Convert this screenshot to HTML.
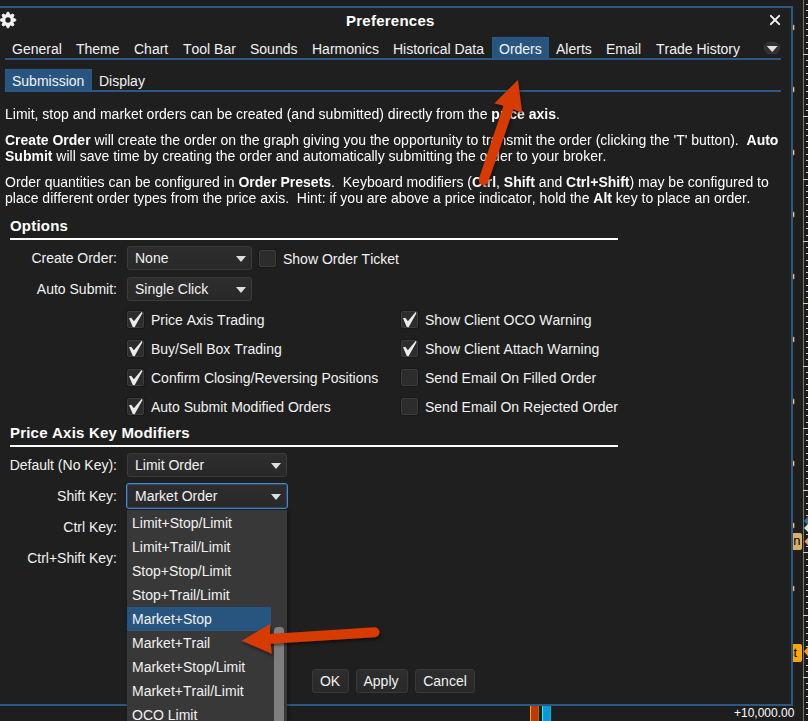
<!DOCTYPE html>
<html>
<head>
<meta charset="utf-8">
<title>Preferences</title>
<style>
html,body{margin:0;padding:0;}
body{font-kerning:none;width:808px;height:721px;overflow:hidden;background:#1e1e1e;font-family:"Liberation Sans",sans-serif;font-size:14px;color:#f2f2f2;position:relative;}
.abs{position:absolute;}
.t{position:absolute;white-space:pre;line-height:16px;font-size:14px;}
.b{font-weight:bold;color:#fff;}
.g{will-change:transform;color:#fff;}
.h{position:absolute;white-space:pre;line-height:18px;font-size:15px;font-weight:bold;color:#fff;letter-spacing:0.2px;}
.tab{position:absolute;white-space:pre;line-height:16px;font-size:14px;top:41px;}
.combo{position:absolute;box-sizing:border-box;height:24px;background:linear-gradient(#2d2d2d,#292929);border:1px solid #3b3b3b;border-radius:3px;}
.combo span{position:absolute;left:7px;top:3px;line-height:16px;white-space:pre;}
.combo i{position:absolute;right:5px;top:9px;width:0;height:0;border-left:5px solid transparent;border-right:5px solid transparent;border-top:6px solid #dedede;}
.cb{position:absolute;box-sizing:border-box;width:17px;height:17px;background:#2c2c2c;border:1px solid #3d3d3d;border-radius:2px;box-shadow:0 0 1px 1px rgba(0,0,0,0.22);}
.cb svg{position:absolute;left:-1px;top:-1px;}
.btn{position:absolute;box-sizing:border-box;height:24px;background:linear-gradient(#2d2d2d,#292929);border:1px solid #393939;border-radius:3px;text-align:center;line-height:22px;font-size:14px;}
.li{position:absolute;left:5px;white-space:pre;line-height:16px;font-size:14px;}
</style>
</head>
<body>
<!-- dialog frame -->
<div class="abs" id="dlg" style="left:-10px;top:6px;width:799px;height:696px;background:#1f1f1f;border:2px solid #2a5985;"></div>

<!-- right price-axis strip -->
<div class="abs" id="axisbg" style="left:804px;top:0;width:4px;height:721px;background:#1c1c1c;"></div>
<div class="abs" id="axisline" style="left:803px;top:0;width:1px;height:721px;background:#77775f;"></div>
<svg class="abs" id="ticks" style="left:793px;top:0" width="15" height="721" viewBox="0 0 15 721"><rect x="13" y="4" width="2" height="1" fill="#d5d3b9"/><rect x="13" y="10" width="2" height="1" fill="#d5d3b9"/><rect x="13" y="17" width="2" height="1" fill="#d5d3b9"/><rect x="13" y="23" width="2" height="1" fill="#d5d3b9"/><rect x="13" y="29" width="2" height="1" fill="#d5d3b9"/><rect x="13" y="35" width="2" height="1" fill="#d5d3b9"/><rect x="13" y="42" width="2" height="1" fill="#d5d3b9"/><rect x="13" y="48" width="2" height="1" fill="#d5d3b9"/><rect x="10" y="54" width="5" height="1" fill="#d5d3b9"/><rect x="13" y="60" width="2" height="1" fill="#d5d3b9"/><rect x="13" y="66" width="2" height="1" fill="#d5d3b9"/><rect x="13" y="73" width="2" height="1" fill="#d5d3b9"/><rect x="13" y="79" width="2" height="1" fill="#d5d3b9"/><rect x="13" y="85" width="2" height="1" fill="#d5d3b9"/><rect x="13" y="91" width="2" height="1" fill="#d5d3b9"/><rect x="13" y="98" width="2" height="1" fill="#d5d3b9"/><rect x="13" y="104" width="2" height="1" fill="#d5d3b9"/><rect x="13" y="110" width="2" height="1" fill="#d5d3b9"/><rect x="10" y="116" width="5" height="1" fill="#d5d3b9"/><rect x="13" y="123" width="2" height="1" fill="#d5d3b9"/><rect x="13" y="129" width="2" height="1" fill="#d5d3b9"/><rect x="13" y="135" width="2" height="1" fill="#d5d3b9"/><rect x="13" y="141" width="2" height="1" fill="#d5d3b9"/><rect x="13" y="147" width="2" height="1" fill="#d5d3b9"/><rect x="13" y="154" width="2" height="1" fill="#d5d3b9"/><rect x="13" y="160" width="2" height="1" fill="#d5d3b9"/><rect x="13" y="166" width="2" height="1" fill="#d5d3b9"/><rect x="13" y="172" width="2" height="1" fill="#d5d3b9"/><rect x="10" y="179" width="5" height="1" fill="#d5d3b9"/><rect x="13" y="185" width="2" height="1" fill="#d5d3b9"/><rect x="13" y="191" width="2" height="1" fill="#d5d3b9"/><rect x="13" y="197" width="2" height="1" fill="#d5d3b9"/><rect x="13" y="204" width="2" height="1" fill="#d5d3b9"/><rect x="13" y="210" width="2" height="1" fill="#d5d3b9"/><rect x="13" y="216" width="2" height="1" fill="#d5d3b9"/><rect x="13" y="222" width="2" height="1" fill="#d5d3b9"/><rect x="13" y="228" width="2" height="1" fill="#d5d3b9"/><rect x="13" y="235" width="2" height="1" fill="#d5d3b9"/><rect x="10" y="241" width="5" height="1" fill="#d5d3b9"/><rect x="13" y="247" width="2" height="1" fill="#d5d3b9"/><rect x="13" y="253" width="2" height="1" fill="#d5d3b9"/><rect x="13" y="260" width="2" height="1" fill="#d5d3b9"/><rect x="13" y="266" width="2" height="1" fill="#d5d3b9"/><rect x="13" y="272" width="2" height="1" fill="#d5d3b9"/><rect x="13" y="278" width="2" height="1" fill="#d5d3b9"/><rect x="13" y="285" width="2" height="1" fill="#d5d3b9"/><rect x="13" y="291" width="2" height="1" fill="#d5d3b9"/><rect x="13" y="297" width="2" height="1" fill="#d5d3b9"/><rect x="10" y="303" width="5" height="1" fill="#d5d3b9"/><rect x="13" y="309" width="2" height="1" fill="#d5d3b9"/><rect x="13" y="316" width="2" height="1" fill="#d5d3b9"/><rect x="13" y="322" width="2" height="1" fill="#d5d3b9"/><rect x="13" y="328" width="2" height="1" fill="#d5d3b9"/><rect x="13" y="334" width="2" height="1" fill="#d5d3b9"/><rect x="13" y="341" width="2" height="1" fill="#d5d3b9"/><rect x="13" y="347" width="2" height="1" fill="#d5d3b9"/><rect x="13" y="353" width="2" height="1" fill="#d5d3b9"/><rect x="13" y="359" width="2" height="1" fill="#d5d3b9"/><rect x="10" y="366" width="5" height="1" fill="#d5d3b9"/><rect x="13" y="372" width="2" height="1" fill="#d5d3b9"/><rect x="13" y="378" width="2" height="1" fill="#d5d3b9"/><rect x="13" y="384" width="2" height="1" fill="#d5d3b9"/><rect x="13" y="390" width="2" height="1" fill="#d5d3b9"/><rect x="13" y="397" width="2" height="1" fill="#d5d3b9"/><rect x="13" y="403" width="2" height="1" fill="#d5d3b9"/><rect x="13" y="409" width="2" height="1" fill="#d5d3b9"/><rect x="13" y="415" width="2" height="1" fill="#d5d3b9"/><rect x="13" y="422" width="2" height="1" fill="#d5d3b9"/><rect x="10" y="428" width="5" height="1" fill="#d5d3b9"/><rect x="13" y="434" width="2" height="1" fill="#d5d3b9"/><rect x="13" y="440" width="2" height="1" fill="#d5d3b9"/><rect x="13" y="446" width="2" height="1" fill="#d5d3b9"/><rect x="13" y="453" width="2" height="1" fill="#d5d3b9"/><rect x="13" y="459" width="2" height="1" fill="#d5d3b9"/><rect x="13" y="465" width="2" height="1" fill="#d5d3b9"/><rect x="13" y="471" width="2" height="1" fill="#d5d3b9"/><rect x="13" y="478" width="2" height="1" fill="#d5d3b9"/><rect x="13" y="484" width="2" height="1" fill="#d5d3b9"/><rect x="10" y="490" width="5" height="1" fill="#d5d3b9"/><rect x="13" y="496" width="2" height="1" fill="#d5d3b9"/><rect x="13" y="503" width="2" height="1" fill="#d5d3b9"/><rect x="13" y="509" width="2" height="1" fill="#d5d3b9"/><rect x="13" y="515" width="2" height="1" fill="#d5d3b9"/><rect x="13" y="521" width="2" height="1" fill="#d5d3b9"/><rect x="13" y="527" width="2" height="1" fill="#d5d3b9"/><rect x="13" y="534" width="2" height="1" fill="#d5d3b9"/><rect x="13" y="540" width="2" height="1" fill="#d5d3b9"/><rect x="13" y="546" width="2" height="1" fill="#d5d3b9"/><rect x="10" y="552" width="5" height="1" fill="#d5d3b9"/><rect x="13" y="559" width="2" height="1" fill="#d5d3b9"/><rect x="13" y="565" width="2" height="1" fill="#d5d3b9"/><rect x="13" y="571" width="2" height="1" fill="#d5d3b9"/><rect x="13" y="577" width="2" height="1" fill="#d5d3b9"/><rect x="13" y="584" width="2" height="1" fill="#d5d3b9"/><rect x="13" y="590" width="2" height="1" fill="#d5d3b9"/><rect x="13" y="596" width="2" height="1" fill="#d5d3b9"/><rect x="13" y="602" width="2" height="1" fill="#d5d3b9"/><rect x="13" y="608" width="2" height="1" fill="#d5d3b9"/><rect x="10" y="615" width="5" height="1" fill="#d5d3b9"/><rect x="13" y="621" width="2" height="1" fill="#d5d3b9"/><rect x="13" y="627" width="2" height="1" fill="#d5d3b9"/><rect x="13" y="633" width="2" height="1" fill="#d5d3b9"/><rect x="13" y="640" width="2" height="1" fill="#d5d3b9"/><rect x="13" y="646" width="2" height="1" fill="#d5d3b9"/><rect x="13" y="652" width="2" height="1" fill="#d5d3b9"/><rect x="13" y="658" width="2" height="1" fill="#d5d3b9"/><rect x="13" y="665" width="2" height="1" fill="#d5d3b9"/><rect x="13" y="671" width="2" height="1" fill="#d5d3b9"/><rect x="10" y="677" width="5" height="1" fill="#d5d3b9"/><rect x="13" y="683" width="2" height="1" fill="#d5d3b9"/><rect x="13" y="689" width="2" height="1" fill="#d5d3b9"/><rect x="13" y="696" width="2" height="1" fill="#d5d3b9"/><rect x="13" y="702" width="2" height="1" fill="#d5d3b9"/><rect x="13" y="708" width="2" height="1" fill="#d5d3b9"/><rect x="13" y="714" width="2" height="1" fill="#d5d3b9"/><rect x="0" y="24" width="1" height="7" fill="#8a2018"/><rect x="0" y="25" width="1" height="5" fill="#e8a040"/><rect x="1" y="25" width="1" height="5" fill="#e8a040" fill-opacity="0.35"/><rect x="0" y="26" width="1" height="3" fill="#f4cf98"/><rect x="0" y="86" width="1" height="7" fill="#8a2018"/><rect x="0" y="87" width="1" height="5" fill="#e8a040"/><rect x="1" y="87" width="1" height="5" fill="#e8a040" fill-opacity="0.35"/><rect x="0" y="88" width="1" height="3" fill="#f4cf98"/><rect x="0" y="149" width="1" height="7" fill="#8a2018"/><rect x="0" y="150" width="1" height="5" fill="#e8a040"/><rect x="1" y="150" width="1" height="5" fill="#e8a040" fill-opacity="0.35"/><rect x="0" y="151" width="1" height="3" fill="#f4cf98"/><rect x="0" y="211" width="1" height="7" fill="#8a2018"/><rect x="0" y="212" width="1" height="5" fill="#e8a040"/><rect x="1" y="212" width="1" height="5" fill="#e8a040" fill-opacity="0.35"/><rect x="0" y="213" width="1" height="3" fill="#f4cf98"/><rect x="0" y="273" width="1" height="7" fill="#8a2018"/><rect x="0" y="274" width="1" height="5" fill="#e8a040"/><rect x="1" y="274" width="1" height="5" fill="#e8a040" fill-opacity="0.35"/><rect x="0" y="275" width="1" height="3" fill="#f4cf98"/><rect x="0" y="336" width="1" height="7" fill="#8a2018"/><rect x="0" y="337" width="1" height="5" fill="#e8a040"/><rect x="1" y="337" width="1" height="5" fill="#e8a040" fill-opacity="0.35"/><rect x="0" y="338" width="1" height="3" fill="#f4cf98"/><rect x="0" y="398" width="1" height="7" fill="#8a2018"/><rect x="0" y="399" width="1" height="5" fill="#e8a040"/><rect x="1" y="399" width="1" height="5" fill="#e8a040" fill-opacity="0.35"/><rect x="0" y="400" width="1" height="3" fill="#f4cf98"/><rect x="0" y="460" width="1" height="7" fill="#8a2018"/><rect x="0" y="461" width="1" height="5" fill="#e8a040"/><rect x="1" y="461" width="1" height="5" fill="#e8a040" fill-opacity="0.35"/><rect x="0" y="462" width="1" height="3" fill="#f4cf98"/><rect x="0" y="522" width="1" height="7" fill="#8a2018"/><rect x="0" y="523" width="1" height="5" fill="#e8a040"/><rect x="1" y="523" width="1" height="5" fill="#e8a040" fill-opacity="0.35"/><rect x="0" y="524" width="1" height="3" fill="#f4cf98"/><rect x="0" y="585" width="1" height="7" fill="#8a2018"/><rect x="0" y="586" width="1" height="5" fill="#e8a040"/><rect x="1" y="586" width="1" height="5" fill="#e8a040" fill-opacity="0.35"/><rect x="0" y="587" width="1" height="3" fill="#f4cf98"/><rect x="0" y="647" width="1" height="7" fill="#8a2018"/><rect x="0" y="648" width="1" height="5" fill="#e8a040"/><rect x="1" y="648" width="1" height="5" fill="#e8a040" fill-opacity="0.35"/><rect x="0" y="649" width="1" height="3" fill="#f4cf98"/></svg>


<!-- right-edge chart labels -->
<div class="abs" id="lab1" style="left:793px;top:533px;width:9px;height:17px;background:#dcae64;border-radius:0 2px 2px 0;overflow:hidden;"><span style="position:absolute;left:-7px;top:0px;font-size:13px;line-height:16px;color:#000;white-space:pre;">en</span></div>
<div class="abs" id="lab2" style="left:793px;top:644px;width:9px;height:18px;background:#ffa500;border-radius:0 2px 2px 0;overflow:hidden;"><span style="position:absolute;left:-6px;top:1px;font-size:13px;line-height:16px;color:#000;white-space:pre;">st</span></div>
<svg class="abs" id="diam" style="left:803px;top:0" width="5" height="721" viewBox="0 0 5 721">
<path d="M1 521 L6 515.5 L6 526.5 Z" fill="#3a6ea5"/>
<path d="M1 528 L6 523 L6 533 Z" fill="#d8f0dc"/>
<path d="M1.5 541.5 L7 535.5 L7 547.5 Z" fill="#dcae64"/>
<path d="M1 651.5 L7 644.5 L7 658.5 Z" fill="#ffa500"/>
</svg>

<!-- title bar -->
<svg class="abs" id="gear" style="left:0;top:11px" width="18" height="18" viewBox="0 0 18 18">
<g transform="translate(8,9)" fill="#f2f2f2" stroke="#f2f2f2" stroke-width="0.8" stroke-linejoin="round">
<circle r="5.5" stroke="none"/>
<path d="M-1.9 -5 L-0.8 -7.8 L0.8 -7.8 L1.9 -5 Z" transform="rotate(0)"/><path d="M-1.9 -5 L-0.8 -7.8 L0.8 -7.8 L1.9 -5 Z" transform="rotate(45)"/><path d="M-1.9 -5 L-0.8 -7.8 L0.8 -7.8 L1.9 -5 Z" transform="rotate(90)"/><path d="M-1.9 -5 L-0.8 -7.8 L0.8 -7.8 L1.9 -5 Z" transform="rotate(135)"/><path d="M-1.9 -5 L-0.8 -7.8 L0.8 -7.8 L1.9 -5 Z" transform="rotate(180)"/><path d="M-1.9 -5 L-0.8 -7.8 L0.8 -7.8 L1.9 -5 Z" transform="rotate(225)"/><path d="M-1.9 -5 L-0.8 -7.8 L0.8 -7.8 L1.9 -5 Z" transform="rotate(270)"/><path d="M-1.9 -5 L-0.8 -7.8 L0.8 -7.8 L1.9 -5 Z" transform="rotate(315)"/>
<circle r="2.7" fill="#1f1f1f" stroke="none"/>
</g>
</svg>
<div class="h" id="title" style="left:346px;top:12px;letter-spacing:0.25px;">Preferences</div>
<svg class="abs" id="close" style="left:767px;top:12px" width="16" height="16" viewBox="0 0 16 16"><path d="M3.85 3.85 L12.15 12.15 M12.15 3.85 L3.85 12.15" stroke="#f4f4f4" stroke-width="2" stroke-linecap="round" fill="none"/></svg>

<!-- main tabs -->
<div class="abs" id="tabsel" style="left:492px;top:37px;width:57px;height:22px;box-sizing:border-box;background:#28557f;border:1px solid #2a5985;"></div>
<div class="abs" id="tabline" style="left:5px;top:58px;width:776px;height:2px;background:#2a5985;"></div>
<div class="tab" id="tb1" style="left:12px">General</div>
<div class="tab" id="tb2" style="left:76px">Theme</div>
<div class="tab" id="tb3" style="left:134px">Chart</div>
<div class="tab" id="tb4" style="left:183px">Tool Bar</div>
<div class="tab" id="tb5" style="left:250px">Sounds</div>
<div class="tab" id="tb6" style="left:312px">Harmonics</div>
<div class="tab" id="tb7" style="left:393px">Historical Data</div>
<div class="tab" id="tb8" style="left:499px">Orders</div>
<div class="tab" id="tb9" style="left:556px">Alerts</div>
<div class="tab" id="tb10" style="left:606px">Email</div>
<div class="tab" id="tb11" style="left:656px">Trade History</div>
<div class="abs" id="pill" style="left:764px;top:42px;width:16px;height:12px;box-sizing:border-box;background:#303030;border:1px solid #3a3a3a;border-radius:6px;"></div>
<svg class="abs" id="pilltri" style="left:764px;top:42px" width="16" height="12" viewBox="0 0 16 12"><path d="M2.8 4 L13.6 4 L8.2 10 Z" fill="#e2e2e2"/></svg>

<!-- sub tabs -->
<div class="abs" id="subsel" style="left:5px;top:69px;width:87px;height:22px;box-sizing:border-box;background:#28557f;border:1px solid #2a5985;"></div>
<div class="abs" id="subline" style="left:5px;top:90px;width:776px;height:2px;background:#2a5985;"></div>
<div class="t" id="st1" style="left:12px;top:73px">Submission</div>
<div class="t" id="st2" style="left:99px;top:73px">Display</div>

<!-- description -->
<div class="t g" id="p1" style="left:5px;top:106px">Limit, stop and market orders can be created (and submitted) directly from the <span class="b">price axis</span>.</div>
<div class="t g" id="p2" style="left:5px;top:132px"><span class="b">Create Order</span> will create the order on the graph giving you the opportunity to transmit the order (clicking the 'T' button).  <span class="b">Auto</span></div>
<div class="t g" id="p3" style="left:5px;top:148px"><span class="b">Submit</span> will save time by creating the order and automatically submitting the order to your broker.</div>
<div class="t g" id="p4" style="left:5px;top:174px">Order quantities can be configured in <span class="b">Order Presets</span>.  Keyboard modifiers (<span class="b">Ctrl</span>, <span class="b">Shift</span> and <span class="b">Ctrl+Shift</span>) may be configured to</div>
<div class="t g" id="p5" style="left:5px;top:190px">place different order types from the price axis.  Hint: if you are above a price indicator, hold the <span class="b">Alt</span> key to place an order.</div>

<!-- Options -->
<div class="h" id="h1" style="left:10px;top:217px;">Options</div>
<div class="abs" id="r1" style="left:10px;top:238px;width:608px;height:2px;background:#fff;"></div>

<div class="t" id="l1" style="left:0;width:117px;text-align:right;top:250px">Create Order:</div>
<div class="combo" id="c1" style="left:127px;top:246px;width:125px;"><span>None</span><i></i></div>
<div class="cb" id="k0" style="left:259px;top:250px;"></div>
<div class="t" id="k0t" style="left:283px;top:251px">Show Order Ticket</div>

<div class="t" id="l2" style="left:0;width:117px;text-align:right;top:281px">Auto Submit:</div>
<div class="combo" id="c2" style="left:127px;top:277px;width:125px;"><span>Single Click</span><i></i></div>

<!-- checkbox grid -->
<div class="cb" id="k1" style="left:127px;top:311px;"><svg width="17" height="17" viewBox="0 0 17 17"><path d="M2 7.3 L4.2 6.8 L6.9 10.3 L14.6 1 L15.5 2 L7.6 16.3 L5.8 16 Z" fill="#ececec"/></svg></div>
<div class="t" id="k1t" style="left:151px;top:312px">Price Axis Trading</div>
<div class="cb" id="k2" style="left:127px;top:340px;"><svg width="17" height="17" viewBox="0 0 17 17"><path d="M2 7.3 L4.2 6.8 L6.9 10.3 L14.6 1 L15.5 2 L7.6 16.3 L5.8 16 Z" fill="#ececec"/></svg></div>
<div class="t" id="k2t" style="left:151px;top:341px">Buy/Sell Box Trading</div>
<div class="cb" id="k3" style="left:127px;top:369px;"><svg width="17" height="17" viewBox="0 0 17 17"><path d="M2 7.3 L4.2 6.8 L6.9 10.3 L14.6 1 L15.5 2 L7.6 16.3 L5.8 16 Z" fill="#ececec"/></svg></div>
<div class="t" id="k3t" style="left:151px;top:370px">Confirm Closing/Reversing Positions</div>
<div class="cb" id="k4" style="left:127px;top:398px;"><svg width="17" height="17" viewBox="0 0 17 17"><path d="M2 7.3 L4.2 6.8 L6.9 10.3 L14.6 1 L15.5 2 L7.6 16.3 L5.8 16 Z" fill="#ececec"/></svg></div>
<div class="t" id="k4t" style="left:151px;top:399px">Auto Submit Modified Orders</div>

<div class="cb" id="k5" style="left:401px;top:311px;"><svg width="17" height="17" viewBox="0 0 17 17"><path d="M2 7.3 L4.2 6.8 L6.9 10.3 L14.6 1 L15.5 2 L7.6 16.3 L5.8 16 Z" fill="#ececec"/></svg></div>
<div class="t" id="k5t" style="left:425px;top:312px">Show Client OCO Warning</div>
<div class="cb" id="k6" style="left:401px;top:340px;"><svg width="17" height="17" viewBox="0 0 17 17"><path d="M2 7.3 L4.2 6.8 L6.9 10.3 L14.6 1 L15.5 2 L7.6 16.3 L5.8 16 Z" fill="#ececec"/></svg></div>
<div class="t" id="k6t" style="left:425px;top:341px">Show Client Attach Warning</div>
<div class="cb" id="k7" style="left:401px;top:369px;"></div>
<div class="t" id="k7t" style="left:425px;top:370px">Send Email On Filled Order</div>
<div class="cb" id="k8" style="left:401px;top:398px;"></div>
<div class="t" id="k8t" style="left:425px;top:399px">Send Email On Rejected Order</div>

<!-- Price Axis Key Modifiers -->
<div class="h" id="h2" style="left:10px;top:424px;">Price Axis Key Modifiers</div>
<div class="abs" id="r2" style="left:10px;top:445px;width:608px;height:2px;background:#fff;"></div>

<div class="t" id="l3" style="left:0;width:117px;text-align:right;top:457px">Default (No Key):</div>
<div class="combo" id="c3" style="left:127px;top:453px;width:160px;"><span>Limit Order</span><i></i></div>
<div class="t" id="l4" style="left:0;width:117px;text-align:right;top:488px">Shift Key:</div>
<div class="combo" id="c4" style="left:126px;top:483px;width:162px;height:26px;border:1px solid #3f8bd4;border-radius:3px;box-shadow:inset 0 0 0 1px rgba(63,139,212,0.32);"><span style="left:8px;top:4px">Market Order</span><i style="right:6px;top:10px"></i></div>
<div class="t" id="l5" style="left:0;width:117px;text-align:right;top:519px">Ctrl Key:</div>
<div class="t" id="l6" style="left:0;width:117px;text-align:right;top:550px">Ctrl+Shift Key:</div>

<!-- buttons -->
<div class="btn" id="b1" style="left:312px;top:669px;width:37px;padding-right:1px;">OK</div>
<div class="btn" id="b2" style="left:356px;top:669px;width:52px;padding-right:2px;">Apply</div>
<div class="btn" id="b3" style="left:415px;top:669px;width:60px;">Cancel</div>

<!-- bottom strip -->
<div class="abs" id="bar1" style="left:530px;top:706px;width:9px;height:15px;background:#b83a06;border-left:1px solid #ffa500;border-right:1px solid #c86000;box-sizing:border-box;"></div>
<div class="abs" id="bar2" style="left:542px;top:706px;width:9px;height:15px;background:#0a98d8;border-left:1px solid #00ffff;border-right:1px solid #00b8c0;box-sizing:border-box;"></div>
<div class="t" id="amt" style="left:734px;top:705px;font-size:12px;color:#fff;">+10,000.00</div>

<!-- dropdown list -->
<div class="abs" id="list" style="left:127px;top:510px;width:160px;height:211px;background:#383838;overflow:hidden;box-shadow:1px 1px 4px rgba(0,0,0,0.45);">
  <div class="abs" id="lsel" style="left:0;top:97px;width:144px;height:24px;background:#28557f;"></div>
  <div class="li" id="i1" style="top:5px">Limit+Stop/Limit</div>
  <div class="li" id="i2" style="top:29px">Limit+Trail/Limit</div>
  <div class="li" id="i3" style="top:53px">Stop+Stop/Limit</div>
  <div class="li" id="i4" style="top:77px">Stop+Trail/Limit</div>
  <div class="li" id="i5" style="top:101px">Market+Stop</div>
  <div class="li" id="i6" style="top:125px">Market+Trail</div>
  <div class="li" id="i7" style="top:149px">Market+Stop/Limit</div>
  <div class="li" id="i8" style="top:173px">Market+Trail/Limit</div>
  <div class="li" id="i9" style="top:197px">OCO Limit</div>
  <div class="abs" id="thumb" style="left:147px;top:117px;width:10px;height:120px;background:#7e7e7e;border-radius:4px;"></div>
</div>

<!-- annotations (red arrows) -->
<svg class="abs" id="arrows" style="left:0;top:0" width="808" height="721" viewBox="0 0 808 721">
<defs><filter id="sh" x="-20%" y="-20%" width="140%" height="140%"><feDropShadow dx="1" dy="2" stdDeviation="1.5" flood-color="#000" flood-opacity="0.5"/></filter></defs>
<g filter="url(#sh)" fill="#d83b01">
<path d="M517.90 80.00 L522.14 112.84 L513.39 109.21 L488.29 181.59 A4.90 4.90 0 0 1 479.01 178.41 L503.55 105.85 L494.42 103.35 Z"/>
<path d="M241.70 640.80 L269.97 623.99 L270.02 634.06 L374.18 627.21 A5.00 5.00 0 0 1 374.82 637.19 L270.66 643.84 L271.90 653.83 Z"/>
</g>
</svg>

</body>
</html>
